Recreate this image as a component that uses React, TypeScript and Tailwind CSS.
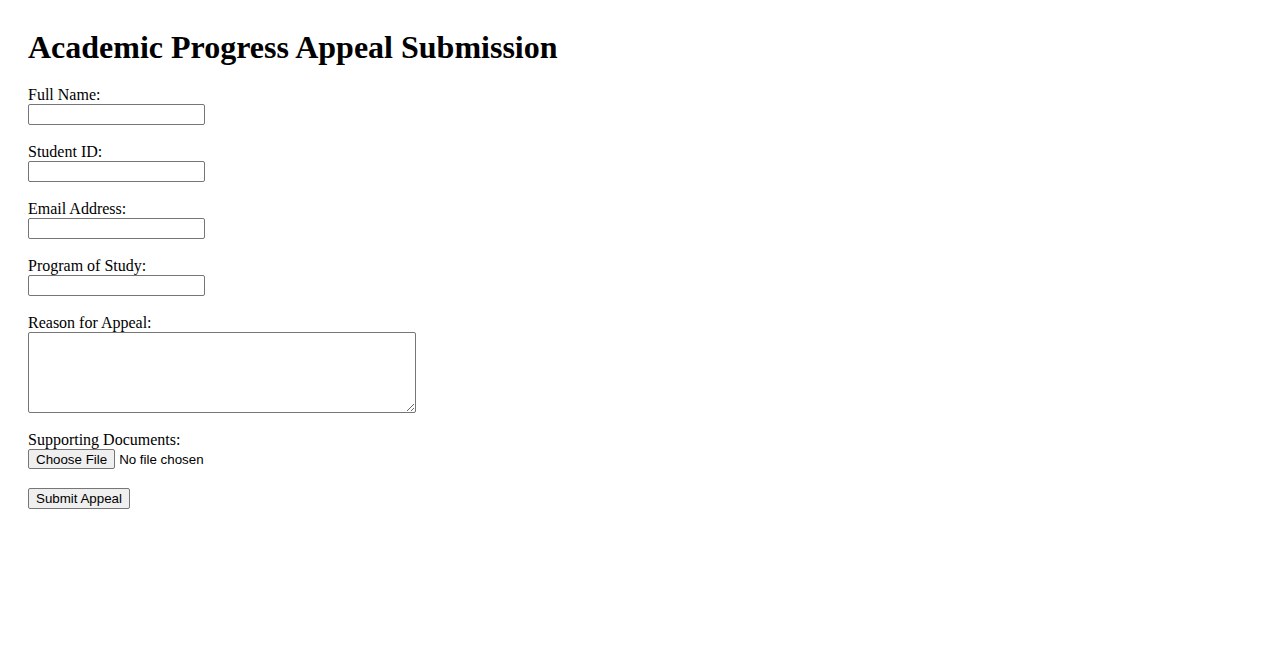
import React from "react";

const serif = "font-['Liberation_Serif','Times_New_Roman',serif]";

function Field({ label, id, type = "text" }: { label: string; id: string; type?: string }) {
  return (
    <div className="mb-[18px]">
      <label htmlFor={id} className="block leading-[18px] text-[16px]">
        {label}
      </label>
      <input
        id={id}
        type={type}
        className="block w-[177px] h-[21px] border border-[#767676] rounded-[2px] bg-white px-[2px] py-[1px] text-[13.33px] font-['Liberation_Sans',Arial,sans-serif]"
      />
    </div>
  );
}

export default function App() {
  return (
    <div className={`min-h-[650px] bg-white text-black p-[28px] ${serif}`}>
      <h1 className="text-[32px] font-bold leading-[39px] mb-[19px]">
        Academic Progress Appeal Submission
      </h1>
      <form onSubmit={(e) => e.preventDefault()}>
        <Field label="Full Name:" id="name" />
        <Field label="Student ID:" id="sid" />
        <Field label="Email Address:" id="email" type="email" />
        <Field label="Program of Study:" id="program" />
        <div className="mb-[18px]">
          <label htmlFor="reason" className="block leading-[18px] text-[16px]">
            Reason for Appeal:
          </label>
          <textarea
            id="reason"
            className="block w-[388px] h-[81px] border border-[#767676] rounded-[2px] bg-white p-[2px] text-[13.33px] font-['Liberation_Mono',monospace] resize"
          />
        </div>
        <div className="mb-[18px]">
          <label htmlFor="docs" className="block leading-[18px] text-[16px]">
            Supporting Documents:
          </label>
          <input
            id="docs"
            type="file"
            className="block h-[21px] text-[13.33px] leading-[19px] font-['Liberation_Sans',Arial,sans-serif] file:h-[20px] file:mr-[4px] file:px-[7px] file:border file:border-[#767676] file:rounded-[2px] file:bg-[#efefef] file:text-black"
          />
        </div>
        <button
          type="submit"
          className="block h-[21px] w-[102px] px-[6px] border border-[#767676] rounded-[2px] bg-[#efefef] text-[13.33px] font-['Liberation_Sans',Arial,sans-serif] text-black"
        >
          Submit Appeal
        </button>
      </form>
    </div>
  );
}
